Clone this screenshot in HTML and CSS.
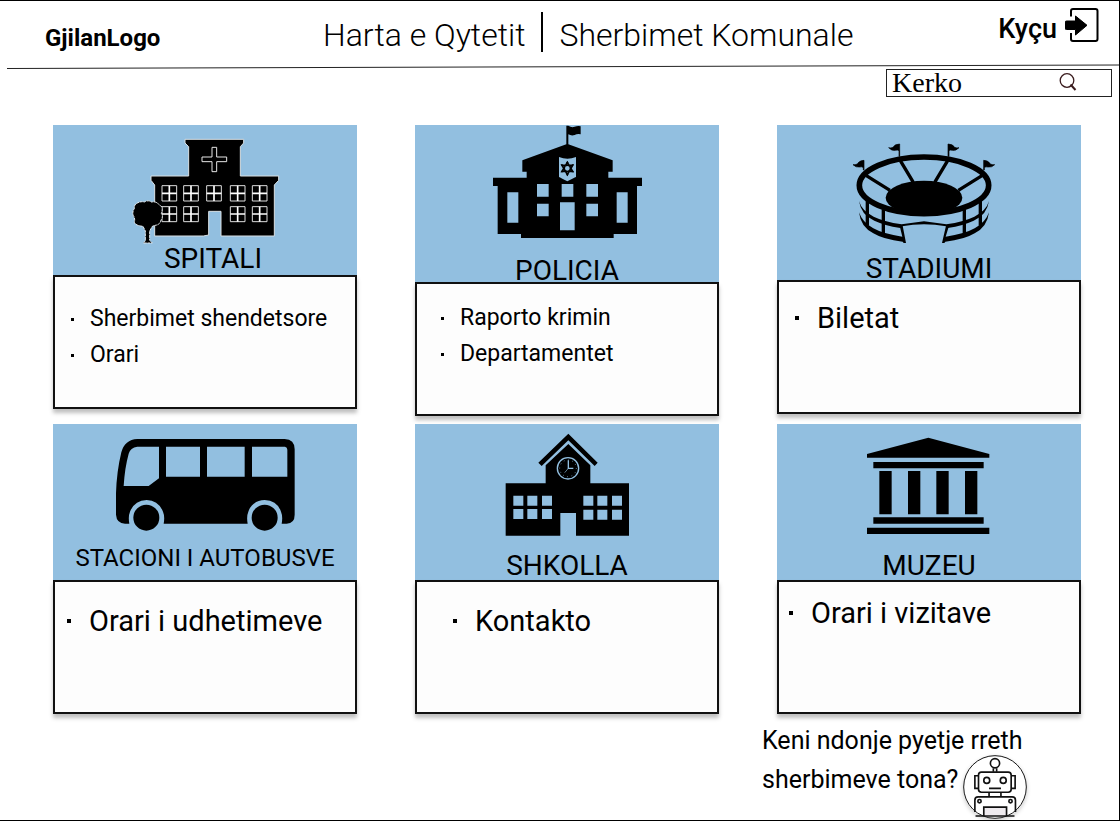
FILE: index.html
```html
<!DOCTYPE html>
<html lang="sq">
<head>
<meta charset="utf-8">
<meta name="viewport" content="width=device-width, initial-scale=1">
<title>Sherbimet Komunale</title>
<link rel="stylesheet" href="styles.css">
</head>
<body>
<div class="page">
  <header class="header">
    <div class="header__bar">
      <a class="logo" href="#">GjilanLogo</a>
      <nav class="nav">
        <a class="nav__link" href="#">Harta e Qytetit</a>
        <span class="nav__divider"></span>
        <a class="nav__link" href="#">Sherbimet Komunale</a>
      </nav>
      <a class="login" href="#">Kyçu
        <svg class="login__icon" viewBox="0 0 34 34" aria-hidden="true">
          <path d="M6 8.500V3q0-2 2-2H30.500q2 0 2 2V31q0 2-2 2H8q-2 0-2-2V25" fill="none" stroke="#000" stroke-width="2"/>
          <path d="M1.500 13H10.500V8L22 17.300 10.500 27V21.500H1.500Q0 21.500 0 20v-5.500Q0 13 1.500 13Z" stroke="#000" stroke-width="1" stroke-linejoin="round"/>
        </svg>
      </a>
    </div>
    <svg class="header__rule" viewBox="0 0 1112 5" preserveAspectRatio="none" aria-hidden="true"><path d="M0 4.500L1112 1" stroke="#222" stroke-width="1"/></svg>
  </header>

  <form class="search" role="search">
    <input class="search__input" type="search" placeholder="Kerko" aria-label="Kerko">
    <button class="search__button" type="button" aria-label="Kerko">
      <svg class="search__icon" viewBox="0 0 18 20" fill="none" stroke="#3a1c1e" aria-hidden="true"><circle cx="8" cy="8.500" r="6.800" stroke-width="1.300"/><path d="M11.500 12.500L16.500 18" stroke-width="2"/></svg>
    </button>
  </form>

  <main class="services">
    <section class="card card--hospital">
      <div class="card__head">
        <svg class="card__icon" viewBox="195 30 600 360" aria-hidden="true">
          <path d="M435 73H611V84L601 95V183H716V196L703 210V363H543V289H506V360L490 363H344V210L333 196V183H446V95L435 84Z" stroke="#d9e0e4" stroke-width="3"/>
          <path d="M516 97h14v29h30v14h-30v30h-14v-30h-30v-14h30Z" fill="none" stroke="#e6e6e6" stroke-width="3"/>
          <g fill="none" stroke="#ddd" stroke-width="3">
            <path d="M366 212h44v46h-44ZM431 212h44v46h-44ZM500 212h44v46h-44ZM571 212h44v46h-44ZM637 212h44v46h-44ZM366 275h44v45h-44ZM431 275h44v45h-44ZM571 275h44v45h-44ZM637 275h44v45h-44Z"/>
            <path stroke="#fff" stroke-width="5" d="M388 212v46M366 235h44M453 212v46M431 235h44M522 212v46M500 235h44M593 212v46M571 235h44M659 212v46M637 235h44M388 275v45M366 297h44M453 275v45M431 297h44M593 275v45M571 297h44M659 275v45M637 297h44"/>
          </g>
          <path d="M289 266Q300 258 313 261Q325 254 334 261Q349 259 355 267L366 276Q368 286 364 295Q371 305 363 315Q360 330 345 331L337 334 329 348V376L337 384H310L316 378V348L309 334Q287 332 283 322Q286 310 280 302Q276 290 283 281Q282 270 289 266Z" stroke="#e2e7ea" stroke-width="3" stroke-dasharray="9 2"/>
        </svg>
        <h2 class="card__title">SPITALI</h2>
      </div>
      <ul class="card__list">
        <li><a href="#">Sherbimet shendetsore</a></li>
        <li><a href="#">Orari</a></li>
      </ul>
    </section>

    <section class="card card--police">
      <div class="card__head">
        <svg class="card__icon" viewBox="201 30 600 360" aria-hidden="true">
          <path d="M499 32H505Q515 39 524 35Q534 32 542 34V58Q532 56 524 60Q514 63 505 58V88L638 136V170H625V188H726V213H711V357H641V369H363V357H293V213H279V188H380V170H367V136L499 88Z"/>
          <g fill="#92bfe0">
            <path d="M322 232h33v91h-33ZM650 232h33v91h-33ZM411 207h35v38h-35ZM485 207h35v38h-35ZM559 207h35v38h-35ZM411 266h35v38h-35ZM559 266h35v38h-35ZM480 262h44v84h-44Z"/>
            <path d="M477 126Q502 136 528 126V186Q522 188 502 199Q482 188 477 186Z"/>
          </g>
          <path d="M502 142L518 169H486ZM502 179L486 151H518Z" fill="none" stroke="#000" stroke-width="5"/>
          <circle cx="502" cy="160" r="9" fill="#92bfe0" stroke="#000" stroke-width="4"/>
          <path d="M502 138l4 6h-8ZM502 184l4-6h-8ZM482 148l7 0-3 6ZM522 148l-7 0 3 6ZM482 172l7 0-3-6ZM522 172l-7 0 3-6Z"/>
        </svg>
        <h2 class="card__title">POLICIA</h2>
      </div>
      <ul class="card__list">
        <li><a href="#">Raporto krimin</a></li>
        <li><a href="#">Departamentet</a></li>
      </ul>
    </section>

    <section class="card card--stadium">
      <div class="card__head">
        <svg class="card__icon" viewBox="192 30 600 360" aria-hidden="true">
          <ellipse cx="477" cy="211" rx="194" ry="85" fill="none" stroke="#000" stroke-width="17"/>
          <ellipse cx="477" cy="248" rx="115" ry="51"/>
          <path d="M304 182L375 226M406 137L445 202M548 137L509 202M651 182L580 226" fill="none" stroke="#000" stroke-width="10"/>
          <path d="M404 124V87Q390 87 384 97Q378 100 371 98Q380 108 391 106Q398 104 402 107V124ZM549 124V87Q563 87 569 97Q575 100 582 98Q573 108 562 106Q555 104 552 107V124ZM297 165V136Q283 136 277 147Q271 150 264 149Q273 158 284 156Q291 154 295 158V165ZM656 165V136Q670 136 676 147Q682 150 689 149Q680 158 669 156Q662 154 658 158V165Z" stroke="#000" stroke-width="2"/>
          <path d="M307 255V332M355 283V357M598 283V357M646 255V332" stroke="#000" stroke-width="10"/>
          <path d="M282 258Q290 287 326 305Q357 320 410 328L477 319 544 328Q597 320 628 305Q664 287 672 258Q666 300 626 317Q596 331 548 339L543 334Q477 321 411 334L406 339Q358 331 328 317Q288 300 282 258Z"/>
          <path d="M282 292Q292 322 325 340Q355 357 412 365L404 332H413L423 384H416L413 380Q356 374 325 355Q287 336 282 292ZM672 292Q662 322 629 340Q599 357 542 365L552 332H543L531 384H538L541 380Q598 374 629 355Q667 336 672 292Z"/>
        </svg>
        <h2 class="card__title">STADIUMI</h2>
      </div>
      <ul class="card__list card__list--large">
        <li><a href="#">Biletat</a></li>
      </ul>
    </section>

    <section class="card card--bus">
      <div class="card__head">
        <svg class="card__icon" viewBox="195 27 600 360" aria-hidden="true">
          <path d="M292 72H734Q764 73 764 103V299Q764 325 740 326H725Q729 304 723 290Q712 257 674 255Q636 257 625 290Q619 304 623 326H371Q375 304 369 290Q356 257 320 255Q283 257 270 290Q264 304 268 326H255Q230 325 228 299V235Q230 170 244 112Q254 74 292 72Z"/>
          <circle cx="319" cy="308" r="39"/><circle cx="674" cy="308" r="39"/>
          <path d="M292 95H357V190L326 213H251Q254 160 266 116Q271 98 292 95ZM378 95H480V185H378ZM501 95H614V185H501ZM636 95H735Q742 96 742 104V185H636Z" fill="#92bfe0"/>
        </svg>
        <h2 class="card__title">STACIONI I AUTOBUSVE</h2>
      </div>
      <ul class="card__list card__list--large">
        <li><a href="#">Orari i udhetimeve</a></li>
      </ul>
    </section>

    <section class="card card--school">
      <div class="card__head">
        <svg class="card__icon" viewBox="201 27 600 360" aria-hidden="true">
          <path d="M505 56L593 143 584 153 505 76 425 153 415 143Z"/>
          <path d="M505 87L571 151V205H687V362H528V294H481V362H317V205H437V151Z"/>
          <path d="M340 242h30v30h-30ZM382 242h30v30h-30ZM426 242h30v30h-30ZM340 282h30v30h-30ZM382 282h30v30h-30ZM426 282h30v30h-30ZM550 242h30v30h-30ZM592 242h30v30h-30ZM636 242h30v30h-30ZM550 284h30v30h-30ZM592 284h30v30h-30ZM636 284h30v30h-30Z" fill="#92bfe0"/>
          <g fill="none" stroke="#92bfe0">
            <circle cx="504" cy="160" r="32" stroke-width="4"/>
            <circle cx="504" cy="160" r="25" stroke-width="3" stroke-dasharray="2 11"/>
            <path d="M505 136V160H520" stroke-width="4"/><path d="M505 160L494 173" stroke-width="2"/>
          </g>
        </svg>
        <h2 class="card__title">SHKOLLA</h2>
      </div>
      <ul class="card__list card__list--large">
        <li><a href="#">Kontakto</a></li>
      </ul>
    </section>

    <section class="card card--museum">
      <div class="card__head">
        <svg class="card__icon" viewBox="192 27 600 360" aria-hidden="true">
          <path d="M306 117L490 68 673 117V128H306ZM325 141H656V160H325ZM343 168h37v130h-37ZM429 168h37v130h-37ZM514 168h37v130h-37ZM600 168h37v130h-37ZM325 307H656V326H325ZM306 338H673V357H306Z"/>
        </svg>
        <h2 class="card__title">MUZEU</h2>
      </div>
      <ul class="card__list card__list--large">
        <li><a href="#">Orari i vizitave</a></li>
      </ul>
    </section>
  </main>

  <footer class="help">
    <div class="help__line">Keni ndonje pyetje rreth</div>
    <div class="help__row">
      <span class="help__text">sherbimeve tona?</span>
      <button class="help__bot" type="button" aria-label="Pyet robotin">
        <svg class="help__icon" viewBox="668 135 194 194" fill="none" stroke="#111" stroke-width="5" aria-hidden="true">
          <circle cx="765" cy="232" r="95" fill="#fff" stroke-width="3"/>
          <circle cx="765" cy="160" r="14"/>
          <path d="M760 175V186M770 175V186"/>
          <rect x="715" y="187" width="99" height="61" rx="9"/>
          <path d="M714 198H704V236H714M815 198H826V236H815"/>
          <circle cx="740" cy="212" r="9"/><circle cx="790" cy="212" r="9"/>
          <path d="M747 236H783M747 249V261M783 249V261"/>
          <path d="M704 308V272Q704 262 714 262H817Q827 262 827 272V308"/>
          <circle cx="718" cy="275" r="5"/><circle cx="812" cy="275" r="5"/>
          <path d="M731 320V293H800V320" fill="#eeeaee"/>
          <path d="M706 320H824"/>
        </svg>
      </button>
    </div>
  </footer>
</div>
</body>
</html>
```
FILE: styles.css
```css
* {
  box-sizing: border-box;
}

body {
  margin: 0;
  background: #fff;
  color: #000;
  font-family: Roboto, "Liberation Sans", sans-serif;
}

a {
  color: inherit;
  text-decoration: none;
}

.page {
  min-height: 100vh;
  border: solid #000;
  border-width: 1px 1px 1px 0;
}

/* Header */
.header__bar {
  display: grid;
  grid-template-columns: minmax(0, 278px) auto 1fr;
  height: 63px;
  padding: 7px 20px 0 45px;
}

.logo {
  padding-top: 16px;
  font-size: 24px;
  line-height: 28px;
  font-weight: 700;
}

.nav {
  display: flex;
  align-items: flex-start;
  gap: 16px;
  padding-top: 4px;
}

.nav__link {
  font-size: 32px;
  line-height: 46px;
  font-weight: 300;
  white-space: nowrap;
}

.nav__divider {
  width: 2px;
  height: 40px;
  background: #000;
}

.login {
  display: flex;
  justify-self: end;
  align-items: flex-start;
  gap: 8px;
  font-size: 27px;
  line-height: 42px;
  font-weight: 500;
}

.login__icon {
  width: 34px;
  height: 34px;
}

.header__rule {
  display: block;
  width: calc(100% - 7px);
  height: 5px;
  margin-left: 7px;
}

/* Search */
.search {
  display: flex;
  width: 226px;
  height: 28px;
  margin: 0 7px 28px auto;
  border: 1px solid #222;
}

.search__input {
  flex: 1;
  min-width: 0;
  padding: 0 0 0 5px;
  border: 0;
  outline: 0;
  background: none;
  font: 28px "Liberation Serif", serif;
  line-height: 26px;
}

.search__input::placeholder {
  color: #000;
}

.search__button {
  display: flex;
  padding: 2px 34px 0 0;
  border: 0;
  background: none;
}

.search__icon {
  width: 18px;
  height: 20px;
}

/* Service cards */
.services {
  display: grid;
  grid-template-columns: repeat(3, minmax(0, 1fr));
  align-items: start;
  gap: 8px 58px;
  padding: 0 38px 0 53px;
}

.card__head {
  display: flex;
  flex-direction: column;
  align-items: center;
  justify-content: space-between;
  min-height: 156px;
  padding-bottom: 4px;
  background: #92bfe0;
}

.card__icon {
  width: 200px;
  height: 120px;
}

.card__title {
  margin: 0;
  font-size: 28px;
  line-height: 20px;
  font-weight: 400;
}

.card__list {
  min-height: 134px;
  margin: 0;
  padding: 21px 16px;
  border: 2px solid #111;
  background: #fdfdfd;
  box-shadow: 0 4px 4px rgba(0, 0, 0, 0.25);
  list-style: none;
  font-size: 23px;
  line-height: 36px;
  font-weight: 400;
}

.card__list li {
  display: flex;
  align-items: center;
  gap: 16px;
}

.card__list li::before {
  content: "";
  width: 3px;
  height: 3px;
  background: #000;
}

.card__list--large {
  font-size: 29px;
}

.card__list--large li {
  gap: 18px;
}

.card__list--large li::before {
  width: 4px;
  height: 4px;
}

.card--hospital .card__head {
  min-height: 150px;
  padding-bottom: 6px;
}

.card--hospital .card__title {
  padding-left: 16px;
}

.card--hospital .card__list {
  padding-top: 24px;
}

.card--police .card__head {
  min-height: 157px;
  padding-bottom: 1px;
}

.card--police .card__list {
  padding: 16px 24px;
}

.card--stadium .card__head {
  min-height: 155px;
  padding-bottom: 1px;
}

.card--stadium .card__list {
  padding-top: 18px;
}

.card--bus .card__head {
  padding-bottom: 12px;
}

.card--bus .card__title {
  font-size: 24px;
}

.card--bus .card__list {
  padding-left: 12px;
}

.card--school .card__list {
  padding-left: 36px;
}

.card--museum .card__list {
  padding: 13px 10px;
}

/* Help prompt */
.help {
  display: flex;
  flex-direction: column;
  width: 357px;
  margin-left: auto;
  padding-top: 12px;
  font-size: 25px;
  line-height: 29px;
  font-weight: 400;
}

.help__row {
  display: flex;
  gap: 5px;
}

.help__text {
  padding-top: 10px;
}

.help__bot {
  display: flex;
  padding: 0;
  border: 0;
  border-radius: 50%;
  background: none;
  box-shadow: 0 2px 4px rgba(0, 0, 0, 0.2);
}

.help__icon {
  width: 64px;
  height: 64px;
}
```
